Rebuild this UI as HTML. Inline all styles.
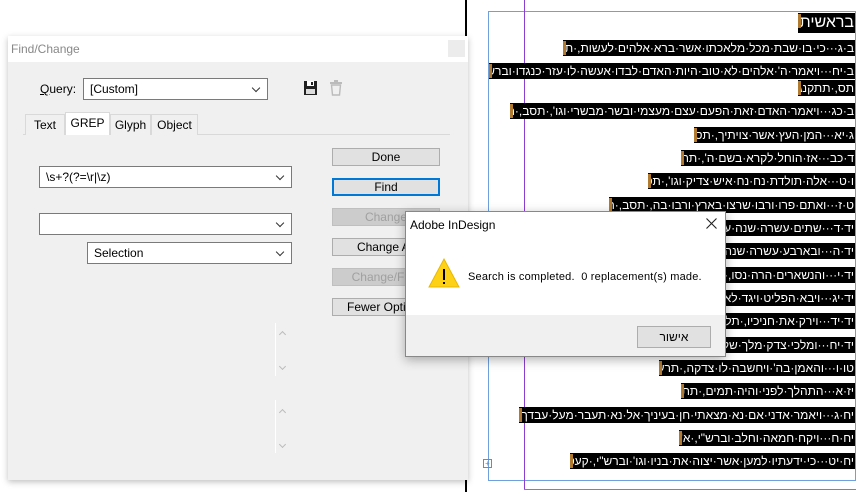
<!DOCTYPE html>
<html><head><meta charset="utf-8"><style>
*{margin:0;padding:0;box-sizing:border-box}
body{width:865px;height:492px;background:#fff;position:relative;overflow:hidden;font-family:"Liberation Sans","DejaVu Sans",sans-serif;font-size:12px;color:#000}
.a{position:absolute}
.ln{position:absolute;right:10px;background:#000;color:#fff;height:16px;line-height:16px;font-size:12px;direction:rtl;white-space:nowrap;overflow:hidden;padding-right:1px;font-family:"Liberation Sans","DejaVu Sans",sans-serif}
.ln::after{content:"";position:absolute;left:0;top:1px;width:3px;height:14px;background:#b07a30}
.btn{position:absolute;left:332px;width:108px;height:18px;background:#e1e1e1;border:1px solid #adadad;text-align:center;line-height:16px;font-size:12px}
.dis{color:#a0a0a0;background:#cccccc;border-color:#bfbfbf}
.sel{position:absolute;background:#fff;border:1px solid #7a7a7a;height:22px;line-height:20px;padding-left:6px;font-size:12px}
.sel::after{content:"";position:absolute;right:8px;top:6px;width:5px;height:5px;border-right:1px solid #333;border-bottom:1px solid #333;transform:rotate(45deg)}
.tab{position:absolute;top:114px;height:21px;line-height:20px;font-size:12px;border:1px solid #d9d9d9;border-bottom:none;background:#f0f0f0;text-align:center}
.up,.dn{position:absolute;left:280px;width:5px;height:5px;border-left:1px solid #bbb;border-top:1px solid #bbb}
.up{transform:rotate(45deg)}.dn{transform:rotate(225deg)}
</style></head><body>
<div class="a" style="left:465px;top:0;width:2px;height:492px;background:#000"></div>
<div class="a" style="left:488px;top:11px;width:368px;height:470px;border:1px solid #6f9fdc"></div>
<div class="a" style="left:524px;top:0;width:1px;height:490px;background:#8a3fd0"></div>
<div class="a" style="left:524px;top:489px;width:332px;height:1px;background:#d050d0"></div>
<div class="a" style="left:483px;top:459px;width:9px;height:9px;border:1px solid #e06060;color:#e06060;font-size:8px;line-height:7px;text-align:center">+</div>

<div class="ln" style="top:13px;left:798px;height:20px;line-height:20px;font-size:16px">בראשית</div>
<div class="ln" style="top:40px;left:563px">ב·ג···כי·בו·שבת·מכל·מלאכתו·אשר·ברא·אלהים·לעשות,·תקצד</div>
<div class="ln" style="top:63px;left:489px">ב·יח···ויאמר·ה'·אלהים·לא·טוב·היות·האדם·לבדו·אעשה·לו·עזר·כנגדו·וברש"י,</div>
<div class="ln" style="top:80px;left:798px">תס,·תתקנג</div>
<div class="ln" style="top:103px;left:510px">ב·כג···ויאמר·האדם·זאת·הפעם·עצם·מעצמי·ובשר·מבשרי·וגו',·תסב,·תתעז</div>
<div class="ln" style="top:127px;left:694px">ג·יא···המן·העץ·אשר·צויתיך,·תסא</div>
<div class="ln" style="top:150px;left:681px">ד·כב···אז·הוחל·לקרא·בשם·ה',·תתמז</div>
<div class="ln" style="top:173px;left:648px">ו·ט···אלה·תולדת·נח·נח·איש·צדיק·וגו',·תסח</div>
<div class="ln" style="top:197px;left:609px">ט·ז···ואתם·פרו·ורבו·שרצו·בארץ·ורבו·בה,·תסב,·תסט</div>
<div class="ln" style="top:220px;left:600px">יד·ד···שתים·עשרה·שנה·עבדו·את·כדרלעמר</div>
<div class="ln" style="top:243px;left:600px">יד·ה···ובארבע·עשרה·שנה·בא·כדרלעמר</div>
<div class="ln" style="top:267px;left:600px">יד·י···והנשארים·הרה·נסו,·תשיג</div>
<div class="ln" style="top:290px;left:600px">יד·יג···ויבא·הפליט·ויגד·לאברם</div>
<div class="ln" style="top:313px;left:600px">יד·יד···וירק·את·חניכיו,·תלד</div>
<div class="ln" style="top:337px;left:600px">יד·יח···ומלכי·צדק·מלך·שלם</div>
<div class="ln" style="top:360px;left:659px">טו·ו···והאמן·בה'·ויחשבה·לו·צדקה,·תרעט</div>
<div class="ln" style="top:383px;left:681px">יז·א···התהלך·לפני·והיה·תמים,·תתנה</div>
<div class="ln" style="top:407px;left:519px">יח·ג···ויאמר·אדני·אם·נא·מצאתי·חן·בעיניך·אל·נא·תעבר·מעל·עבדך,·רלט</div>
<div class="ln" style="top:430px;left:679px">יח·ח···ויקח·חמאה·וחלב·וברש"י,·א'כז</div>
<div class="ln" style="top:453px;left:570px">יח·יט···כי·ידעתיו·למען·אשר·יצוה·את·בניו·וגו'·וברש"י,·קעט,</div>

<div class="a" style="left:8px;top:36px;width:460px;height:444px;background:#f0f0f0;box-shadow:0 2px 6px rgba(0,0,0,.25)">
 <div class="a" style="left:0;top:0;width:460px;height:26px;background:#fff"></div>
 <div class="a" style="left:3px;top:6px;color:#888;font-size:12px">Find/Change</div>
 <div class="a" style="left:440px;top:4px;width:17px;height:17px;background:#ececec"></div>
</div>
<div class="a" style="left:40px;top:82px;font-size:12px"><u>Q</u>uery:</div>
<div class="sel" style="left:83px;top:78px;width:185px">[Custom]</div>
<svg class="a" style="left:303px;top:80px" width="15" height="16" viewBox="0 0 15 16"><rect x="1" y="1" width="13" height="14" fill="#222"/><rect x="4" y="1" width="7" height="5" fill="#fff"/><rect x="8" y="2" width="2" height="3" fill="#222"/><rect x="3" y="9" width="9" height="5" fill="#ddd"/></svg>
<svg class="a" style="left:329px;top:80px" width="14" height="16" viewBox="0 0 14 16"><rect x="1" y="2" width="12" height="2" fill="#bbb"/><rect x="5" y="0" width="4" height="2" fill="#bbb"/><path d="M2.5 5h9l-1 10h-7z" fill="none" stroke="#bbb" stroke-width="1.4"/></svg>
<div class="a" style="left:23px;top:134px;width:427px;height:1px;background:#d9d9d9"></div>
<div class="tab" style="left:25px;width:40px">Text</div>
<div class="tab" style="left:65px;width:45px;top:112px;height:23px;background:#fff">GREP</div>
<div class="tab" style="left:110px;width:41px">Glyph</div>
<div class="tab" style="left:151px;width:47px">Object</div>
<div class="sel" style="left:39px;top:166px;width:253px">\s+?(?=\r|\z)</div>
<div class="sel" style="left:39px;top:213px;width:253px"></div>
<div class="sel" style="left:87px;top:242px;width:205px">Selection</div>
<div class="btn" style="top:148px">Done</div>
<div class="btn" style="top:178px;border:2px solid #0078d7;line-height:14px">Find</div>
<div class="btn dis" style="top:208px">Change</div>
<div class="btn" style="top:238px">Change All</div>
<div class="btn dis" style="top:268px">Change/Find</div>
<div class="btn" style="top:298px">Fewer Options</div>
<div class="a" style="left:275px;top:323px;width:1px;height:53px;background:#fff"></div>
<div class="a" style="left:275px;top:400px;width:1px;height:53px;background:#fff"></div>
<div class="up" style="top:332px"></div><div class="dn" style="top:364px"></div>
<div class="up" style="top:410px"></div><div class="dn" style="top:442px"></div>

<div class="a" style="left:405px;top:211px;width:321px;height:146px;background:#f0f0f0;border:1px solid #888;box-shadow:0 3px 10px rgba(0,0,0,.3)">
 <div class="a" style="left:0;top:0;width:319px;height:103px;background:#fff"></div>
 <div class="a" style="left:4px;top:6px;font-size:12px">Adobe InDesign</div>
 <svg class="a" style="left:300px;top:6px" width="11" height="11" viewBox="0 0 11 11"><path d="M0.5 0.5L10.5 10.5M10.5 0.5L0.5 10.5" stroke="#222" stroke-width="1.1"/></svg>
 <svg class="a" style="left:21px;top:45px" width="34" height="32" viewBox="0 0 34 32"><path d="M17 2L32 30H2Z" fill="#fcd116" stroke="#e8b800" stroke-width="1"/><rect x="16" y="12" width="2" height="11" fill="#000"/><rect x="16" y="25" width="2" height="2" fill="#000"/></svg>
 <div class="a" style="left:62px;top:59px;font-size:11px;letter-spacing:.2px">Search is completed.&nbsp; 0 replacement(s) made.</div>
 <div class="a" style="left:231px;top:114px;width:74px;height:22px;background:#e1e1e1;border:1px solid #adadad;text-align:center;line-height:20px;font-size:12px">אישור</div>
</div>
</body></html>
